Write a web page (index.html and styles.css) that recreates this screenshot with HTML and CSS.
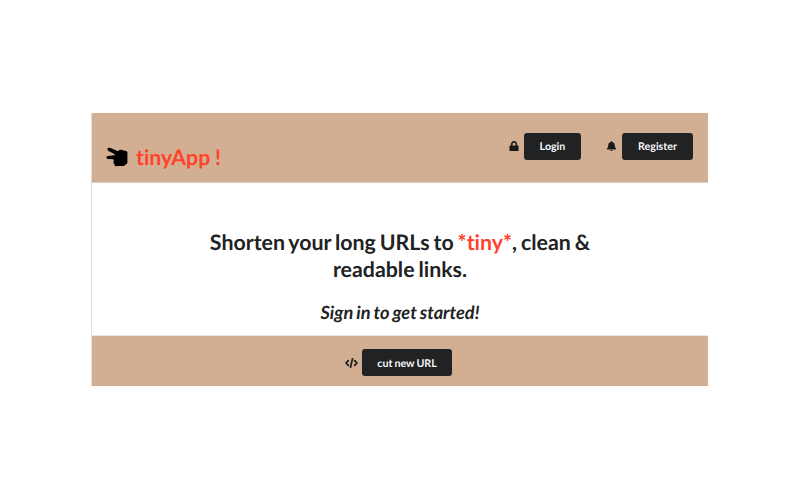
FILE: index.html
```
<!DOCTYPE html>
<html lang="en">
<head>
<meta charset="utf-8">
<title>tinyApp</title>
<link rel="stylesheet" href="styles.css">
</head>
<body>
<div class="card">
  <header class="header">
    <div class="brand">
      <svg class="hand" viewBox="0 0 22 20"><path d="M2.400.8C3.200.5 4 .8 4.600 1.100L12 4.300 13 3.300Q13.800 2.400 15 2.700L20 4Q21.300 4.400 21.400 5.500V15.500Q21.400 16.500 20.500 17.100L18.500 18.400Q17.700 19 16.500 19H12.500L10.300 19.200C8.600 19.300 7.900 18 8.800 17L8.500 16.900C7.300 16.500 7 15 7.900 14L7.300 12.200 1.700 11.900C0 11.700 0 9.200 1.700 9.100L8.600 8.300 8.500 7 2.600 4.100C1 3.200 1.200 1.200 2.400.8Z"/></svg>
      <span class="name">tinyApp !</span>
    </div>
    <nav class="nav">
      <div class="action">
        <svg class="icon lock" viewBox="0 0 448 512"><path d="M400 224h-24v-72C376 68.200 307.800 0 224 0S72 68.200 72 152v72H48c-26.500 0-48 21.500-48 48v192c0 26.500 21.500 48 48 48h352c26.500 0 48-21.500 48-48V272c0-26.500-21.500-48-48-48zm-104 0H152v-72c0-39.700 32.300-72 72-72s72 32.300 72 72v72z"/></svg>
        <a class="button login">Login</a>
      </div>
      <div class="action">
        <svg class="icon bell" viewBox="0 0 448 512"><path d="M224 512c35.320 0 63.970-28.650 63.970-64H160.030c0 35.350 28.650 64 63.970 64zm215.390-149.710c-19.320-20.760-55.470-51.990-55.470-154.290 0-77.700-54.480-139.900-127.940-155.160V32c0-17.670-14.320-32-31.980-32s-31.980 14.330-31.980 32v20.840C118.560 68.100 64.080 130.300 64.080 208c0 102.300-36.150 133.530-55.470 154.290-6 6.450-8.660 14.160-8.610 21.710.11 16.400 12.980 32 32.100 32h383.800c19.120 0 32-15.600 32.100-32 .05-7.550-2.610-15.270-8.610-21.710z"/></svg>
        <a class="button register">Register</a>
      </div>
    </nav>
  </header>
  <main class="main">
    <h1 class="headline">Shorten your long URLs to <span class="accent">*tiny*</span>, clean &amp;<br>readable links.</h1>
    <p class="prompt">Sign in to get started!</p>
  </main>
  <footer class="footer">
    <svg class="code" viewBox="0 0 13 10"><path d="M3.300 2.600 1 5l2.300 2.400M9.700 2.600 12 5 9.700 7.400M7.500.8 5.500 9.200"/></svg>
    <a class="button cut">cut new URL</a>
  </footer>
</div>
</body>
</html>
```
FILE: styles.css
```
* { box-sizing: border-box; }
body {
  margin: 0;
  height: 500px;
  background: #fff;
  color: #212224;
  font-family: Lato, sans-serif;
  font-variant-ligatures: none;
  text-rendering: geometricPrecision;
}
.card {
  width: 617px;
  height: 386px;
  margin-left: 91px;
  padding-top: 113px;
  display: flex;
  flex-direction: column;
}
.header {
  height: 70px;
  flex: none;
  display: flex;
  justify-content: space-between;
  align-items: flex-start;
  padding: 19.500px 15px 0 14px;
  background: #d2af92;
  border-left: 1px solid #dfdcda;
  border-bottom: 1px solid #deccbc;
}
.brand {
  display: flex;
  align-items: center;
  height: 26px;
  margin-top: 11.500px;
}
.hand { width: 22px; height: 20px; margin-right: 8px; fill: #000; }
.name { color: #ff432b; font-size: 21.300px; font-weight: 700; line-height: 26px; word-spacing: -.6px; }
.nav { display: flex; gap: 25px; }
.action { display: flex; align-items: center; }
.icon { height: 10.500px; fill: #1b1a17; }
.lock { width: 10px; margin: 0 5.500px 0 -.5px; }
.bell { width: 11px; margin: 0 5.500px 0 -.5px; }
.button {
  height: 27px;
  padding-top: 1.500px;
  display: flex;
  align-items: center;
  justify-content: center;
  border-radius: 3px;
  background: #202224;
  color: #f8f8f8;
  font-size: 10.700px;
  line-height: 14px;
  font-weight: 700;
  word-spacing: -.6px;
}
.login { width: 57px; }
.register { width: 71px; }
.main {
  height: 152px;
  flex: none;
  padding-top: 46px;
  border-left: 1px solid #dedede;
  text-align: center;
}
.headline { margin: 0; font-size: 21.350px; line-height: 27px; font-weight: 700; word-spacing: -1.300px; }
.accent { color: #ff432b; }
.prompt {
  margin: 17px 0 0;
  font-size: 18.200px;
  line-height: 24px;
  font-weight: 700;
  font-style: italic;
  word-spacing: -1px;
}
.footer {
  height: 51px;
  flex: none;
  display: flex;
  align-items: flex-start;
  justify-content: center;
  padding: 13px 3px 0 0;
  background: #d2af92;
  border-left: 1px solid #dfdcda;
  border-top: 1px solid #eee4dc;
}
.code {
  width: 13px;
  height: 10px;
  margin: 9px 4px 0 0;
  fill: none;
  stroke: #1b1a17;
  stroke-width: 1.700;
  stroke-linecap: round;
  stroke-linejoin: round;
}
.cut { width: 90px; padding-top: 2px; }
```
